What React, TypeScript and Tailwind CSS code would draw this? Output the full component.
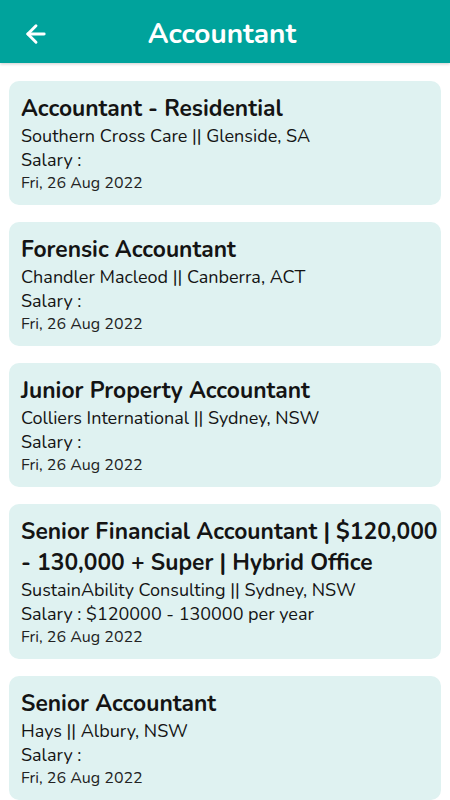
import { ArrowLeft } from 'lucide-react'

type Job = {
  title: string
  company: string
  location: string
  salary: string
  date: string
}

const jobs: Job[] = [
  { title: 'Accountant - Residential', company: 'Southern Cross Care', location: 'Glenside, SA', salary: '', date: 'Fri, 26 Aug 2022' },
  { title: 'Forensic Accountant', company: 'Chandler Macleod', location: 'Canberra, ACT', salary: '', date: 'Fri, 26 Aug 2022' },
  { title: 'Junior Property Accountant', company: 'Colliers International', location: 'Sydney, NSW', salary: '', date: 'Fri, 26 Aug 2022' },
  {
    title: 'Senior Financial Accountant | $120,000 - 130,000 + Super | Hybrid Office',
    company: 'SustainAbility Consulting',
    location: 'Sydney, NSW',
    salary: '$120000 - 130000 per year',
    date: 'Fri, 26 Aug 2022',
  },
  { title: 'Senior Accountant', company: 'Hays', location: 'Albury, NSW', salary: '', date: 'Fri, 26 Aug 2022' },
]

function JobCard({ job }: { job: Job }) {
  return (
    <div className="rounded-[10px] bg-[#dff2f1] pl-3 pr-[2px] pt-[12px] pb-[10px] text-[#141414]">
      <h2 className="text-[22.8px] font-bold leading-[31px]">{job.title}</h2>
      <p className="text-[18px] leading-[24px]">
        {job.company} || {job.location}
      </p>
      <p className="text-[18px] leading-[24px]">Salary : {job.salary}</p>
      <p className="text-[16px] leading-[23px] text-[#222]">{job.date}</p>
    </div>
  )
}

export default function App() {
  return (
    <div className="min-h-screen w-[450px] bg-white" style={{ fontFamily: 'Nunito, Lato, "Open Sans", sans-serif' }}>
      <header className="flex h-[63px] items-center bg-[#00a39c] pl-[22px] pr-[56px] pt-[4px] shadow-[0_1px_3px_rgba(0,0,0,0.2)]">
        <ArrowLeft className="h-[28px] w-[28px] text-white" strokeWidth={2.5} />
        <h1 className="flex-1 text-center text-[28px] font-bold text-white">Accountant</h1>
      </header>
      <div className="flex flex-col gap-[17px] px-[9px] pt-[18px]">
        {jobs.map((job, i) => (
          <JobCard key={i} job={job} />
        ))}
      </div>
    </div>
  )
}
